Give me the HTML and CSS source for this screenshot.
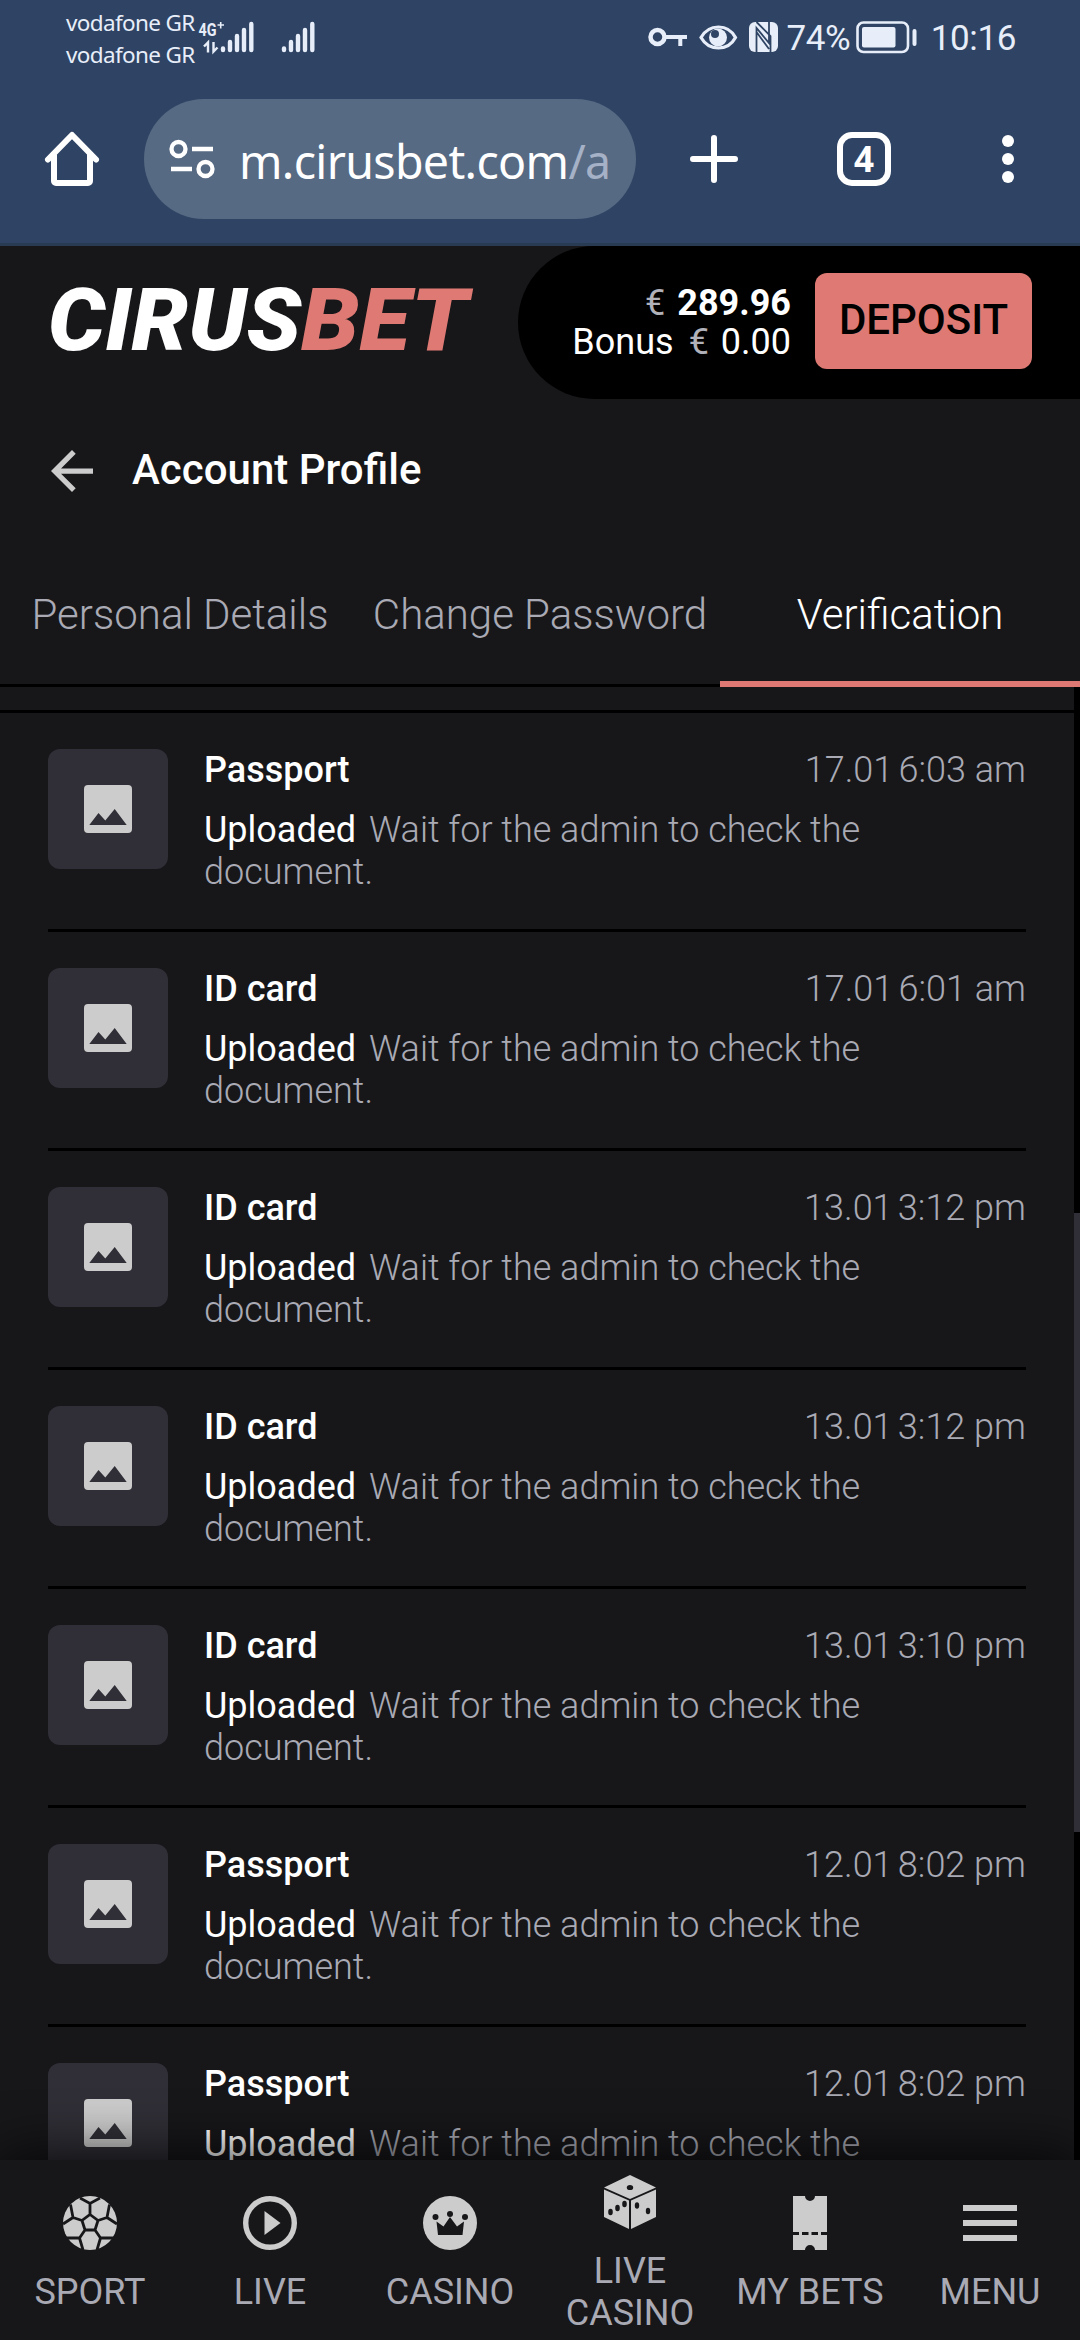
FILE: index.html
```html
<!DOCTYPE html>
<html lang="en">
<head>
<meta charset="utf-8">
<title>Account Profile</title>
<link rel="stylesheet" href="styles.css">
</head>
<body>
<svg width="0" height="0" class="defs">
  <symbol id="image" viewBox="0 0 48 48"><path fill-rule="evenodd" d="M4 0H44a4 4 0 0 1 4 4V44a4 4 0 0 1-4 4H4a4 4 0 0 1-4-4V4a4 4 0 0 1 4-4ZM5.300 40H42.700L30.700 24 21.300 35.500 14.500 28Z"/></symbol>
</svg>
<div class="screen">
  <div class="browser">
    <div class="status">
      <div class="carriers"><span>vodafone GR</span><span>vodafone GR</span></div>
      <svg class="signal" width="122" height="40" viewBox="197 17 122 40">
        <text x="199.500" y="35.500" class="g4" textLength="18" lengthAdjust="spacingAndGlyphs">4G</text>
        <path d="M218.500 25h6.500M221.700 22v6.500" stroke-width="1.600"/>
        <path d="M205 46.500l4-4V52.500M214.500 42V51.500l4-4" stroke-width="2.400"/>
        <g stroke-width="4.400" stroke-linecap="round">
          <path d="M224 48.500V50M231 42V50M238 36V50M245 30V50M252.300 24V50"/>
          <path d="M285 48.500V50M292 42V50M299 36V50M306 30V50M313.300 24V50"/>
        </g>
      </svg>
      <svg class="sysicons" width="131" height="40" viewBox="649 17 131 40">
        <g fill="none" stroke="#e8eef9">
          <circle cx="658.500" cy="37" r="7" stroke-width="4.500"/>
          <path d="M666 37H688M681.300 37V46" stroke-width="4"/>
          <path d="M702 37.500C710 23.500 729 23.500 736.500 37.500C729 51.500 710 51.500 702 37.500Z" stroke-width="3.200"/>
        </g>
        <circle cx="719" cy="37.500" r="9" fill="#e8eef9"/><circle cx="716" cy="34" r="4" fill="#2f4464"/>
        <rect x="750" y="22" width="29" height="30" rx="6" fill="#e8eef9"/>
        <path d="M757.500 52V28L770 43V22M757.500 22L771.500 36V52M757.500 32L770 49" fill="none" stroke="#2f4464" stroke-width="1.800"/>
      </svg>
      <span class="pct">74%</span>
      <svg class="battery" width="62" height="34" viewBox="858 20 62 34">
        <rect x="859.500" y="22.500" width="50.500" height="29.500" rx="6" fill="none" stroke="#e8eef9" stroke-width="2.600"/>
        <rect x="864" y="27" width="33.500" height="20.500" rx="2" fill="#e8eef9"/>
        <rect x="914.500" y="29" width="4" height="17" rx="2" fill="#e8eef9"/>
      </svg>
      <span class="clock">10:16</span>
    </div>
    <div class="toolbar">
      <svg class="home" width="60" height="60" viewBox="42 129 60 60" fill="none" stroke="#fff" stroke-width="6" stroke-linejoin="round" stroke-linecap="round"><path d="M48 159.500L72 135L96 159.500M54 155V181a2 2 0 0 0 2 2H88a2 2 0 0 0 2-2V155"/></svg>
      <div class="address">
        <svg width="48" height="40" viewBox="168 139 48 40" fill="none" stroke="#fff" stroke-width="4.300"><circle cx="178.500" cy="149" r="7"/><path d="M192 149H213M171 169H192"/><circle cx="205.500" cy="169" r="7"/></svg>
        <span class="url">m.cirusbet.com<span class="path">/a</span></span>
      </div>
      <svg class="plus" width="48" height="48" viewBox="0 0 48 48" stroke="#fff" stroke-width="6" stroke-linecap="round"><path d="M3 24H45M24 3V45"/></svg>
      <div class="tabcount">4</div>
      <svg class="dots" width="12" height="48" viewBox="0 0 12 48" fill="#fff"><circle cx="6" cy="6" r="6"/><circle cx="6" cy="24" r="6"/><circle cx="6" cy="42" r="6"/></svg>
    </div>
  </div>

  <header class="site">
    <svg class="logo" width="430" height="80" viewBox="44 280 430 80">
      <text x="48" y="350" textLength="253" lengthAdjust="spacingAndGlyphs" fill="#fff">CIRUS</text>
      <text x="301" y="350" textLength="167" lengthAdjust="spacingAndGlyphs" fill="#de7a73">BET</text>
    </svg>
    <div class="wallet">
      <div class="balance">
        <div><i>€</i> <b>289.96</b></div>
        <div><span class="bonus">Bonus</span><i>€</i> 0.00</div>
      </div>
      <button class="deposit">DEPOSIT</button>
    </div>
  </header>
  <div class="title">
    <svg width="42" height="42" viewBox="4 4 16 16" fill="#ccc"><path d="M20 11H7.830l5.590-5.590L12 4l-8 8 8 8 1.410-1.410L7.830 13H20v-2z"/></svg>
    <h1>Account Profile</h1>
  </div>
  <nav class="tabs"><a>Personal Details</a><a>Change Password</a><a class="on">Verification</a></nav>

  <main class="panel">
    <div class="list">
      <article><div class="thumb"><svg><use href="#image"/></svg></div><div class="info"><div class="head"><b>Passport</b><time><span>17.01</span> 6:03 am</time></div><p><em>Uploaded</em> Wait for the admin to check the document.</p></div></article>
      <article><div class="thumb"><svg><use href="#image"/></svg></div><div class="info"><div class="head"><b>ID card</b><time><span>17.01</span> 6:01 am</time></div><p><em>Uploaded</em> Wait for the admin to check the document.</p></div></article>
      <article><div class="thumb"><svg><use href="#image"/></svg></div><div class="info"><div class="head"><b>ID card</b><time><span>13.01</span> 3:12 pm</time></div><p><em>Uploaded</em> Wait for the admin to check the document.</p></div></article>
      <article><div class="thumb"><svg><use href="#image"/></svg></div><div class="info"><div class="head"><b>ID card</b><time><span>13.01</span> 3:12 pm</time></div><p><em>Uploaded</em> Wait for the admin to check the document.</p></div></article>
      <article><div class="thumb"><svg><use href="#image"/></svg></div><div class="info"><div class="head"><b>ID card</b><time><span>13.01</span> 3:10 pm</time></div><p><em>Uploaded</em> Wait for the admin to check the document.</p></div></article>
      <article><div class="thumb"><svg><use href="#image"/></svg></div><div class="info"><div class="head"><b>Passport</b><time><span>12.01</span> 8:02 pm</time></div><p><em>Uploaded</em> Wait for the admin to check the document.</p></div></article>
      <article><div class="thumb"><svg><use href="#image"/></svg></div><div class="info"><div class="head"><b>Passport</b><time><span>12.01</span> 8:02 pm</time></div><p><em>Uploaded</em> Wait for the admin to check the document.</p></div></article>
    </div>
    <div class="scroll"><div class="bar"></div></div>
  </main>

  <nav class="bottom">
    <a><svg viewBox="0 0 54 54"><circle cx="27" cy="27" r="27" fill="#ccc"/><g fill="none" stroke="#17171a" stroke-width="2.800"><path d="M27 18.500L35 24.500L32 34H22L19 24.500ZM27 18.500V7.500M35 24.500L44 21.500M32 34L37.500 42M22 34L16.500 42M19 24.500L10 21.500M17 2L27 7.500L37 2M46.500 8.500L44 21.500L54 28M51.500 42H37.500L34 54M20 54L16.500 42H2.500M0 28L10 21.500L7.500 8.500"/></g></svg><span>SPORT</span></a>
    <a><svg viewBox="0 0 54 54"><circle cx="27" cy="27" r="24.300" fill="none" stroke="#ccc" stroke-width="5.400"/><path d="M21.500 15V39L37.500 27Z" fill="#ccc"/></svg><span>LIVE</span></a>
    <a><svg viewBox="0 0 54 54"><circle cx="27" cy="27" r="27" fill="#ccc"/><g fill="#17171a"><circle cx="12.500" cy="21" r="3"/><circle cx="27" cy="18" r="3"/><circle cx="42" cy="21" r="3"/><path d="M13.500 25.500L20.500 30.500L27 21L34 30.500L41 25.500L39.500 39H15Z"/></g></svg><span>CASINO</span></a>
    <a><svg viewBox="0 0 54 54"><g fill="#ccc"><path d="M27 0L53 12.500L27 24L1 12.500ZM1 14.500L26 25.500V54L1 42ZM53 14.500L28 25.500V54L53 42Z"/></g><g fill="#17171a"><ellipse cx="27" cy="12.500" rx="3.200" ry="2.600"/><ellipse cx="7.500" cy="37" rx="2.300" ry="3.200"/><ellipse cx="14.500" cy="33" rx="2.300" ry="3.200"/><ellipse cx="21.500" cy="29" rx="2.300" ry="3.200"/><ellipse cx="34" cy="30.500" rx="2.200" ry="3.200"/><ellipse cx="45" cy="36" rx="2.200" ry="3.200"/></g></svg><span>LIVE CASINO</span></a>
    <a><svg viewBox="0 0 54 54"><path fill="#ccc" d="M10 0H22a5 5 0 0 0 10 0H44V36H10ZM10 39H44V54H32a5 5 0 0 0-10 0H10Z"/><path d="M16 37.500H19M25.500 37.500H28.500M35 37.500H38" stroke="#ccc" stroke-width="3.400"/></svg><span>MY BETS</span></a>
    <a><svg viewBox="0 0 54 54"><path fill="#ccc" d="M0 9H54V15H0ZM0 24H54V30H0ZM0 39H54V45H0Z"/></svg><span>MENU</span></a>
  </nav>
</div>
</body>
</html>
```
FILE: styles.css
```css
* { box-sizing: border-box; }
body { margin: 0; background: #17171a; }
.defs { display: block; }
.screen { width: 1080px; height: 2340px; overflow: hidden; display: flex; flex-direction: column; background: #17171a; color: #fff; font: 300 36px/42px Roboto, sans-serif; }
.screen > * { flex-shrink: 0; }
svg { display: block; flex-shrink: 0; }

.browser { height: 246px; background: #2f4464; border-bottom: 3px solid #293b52; font-family: "Noto Sans", sans-serif; font-weight: 400; }
.status { height: 75px; padding: 0 64px 0 66px; display: flex; align-items: flex-start; color: #e8eef9; }
.carriers { display: flex; flex-direction: column; padding-top: 7px; width: 131px; font-size: 22.500px; line-height: 32px; letter-spacing: -.65px; white-space: nowrap; }
.signal { margin-top: 17px; fill: none; stroke: #e8eef9; }
.g4 { font: 700 19px Roboto, sans-serif; fill: #e8eef9; stroke: none; }
.sysicons { margin: 17px 0 0 330px; }
.pct { width: 78px; padding-left: 8px; margin-top: 18px; font: 400 35px/42px Roboto, sans-serif; letter-spacing: -.4px; }
.battery { margin-top: 20px; }
.clock { margin: 18px 0 0 13px; font: 400 35px/42px Roboto, sans-serif; letter-spacing: -.4px; }
.toolbar { height: 168px; padding: 0 66px 0 42px; display: flex; align-items: flex-start; }
.home { margin-top: 54px; }
.address { width: 492px; height: 120px; margin: 24px 0 0 42px; padding-left: 24px; border-radius: 60px; background: #576a83; display: flex; align-items: center; }
.url { margin: 4px 0 0 23px; font-size: 46.500px; line-height: 60px; letter-spacing: -.65px; white-space: nowrap; }
.path { color: #a5b1c6; }
.plus { margin: 60px 0 0 54px; }
.tabcount { width: 54px; height: 54px; margin: 57px 0 0 99px; border: 6px solid #fff; border-radius: 15px; text-align: center; font: 700 35px/42px "Noto Sans", sans-serif; }
.dots { margin: 60px 0 0 111px; }

.site { height: 153px; padding-left: 44px; display: flex; justify-content: space-between; }
.logo { margin-top: 34px; font: italic 900 86px Roboto, sans-serif; }
.wallet { width: 562px; background: #000; border-radius: 77px 0 0 77px; padding-right: 48px; display: flex; justify-content: flex-end; align-items: flex-start; gap: 24px; }
.balance { margin-top: 38px; text-align: right; font-weight: 400; line-height: 39px; white-space: nowrap; }
.balance i { font-style: normal; color: #b0b1b9; margin-right: 3px; }
.balance b { font-weight: 700; }
.bonus { margin-right: 15px; }
.deposit { width: 217px; height: 96px; margin-top: 27px; padding: 0; border: 0; border-radius: 12px; background: #de7a73; color: #000; font: 500 42px/94px Roboto, sans-serif; padding-bottom: 2px; }

.title { height: 144px; padding: 0 51px; display: flex; align-items: center; gap: 39px; }
.title h1 { margin: -3px 0 0; font-size: 42px; line-height: 49px; font-weight: 500; }
.tabs { height: 144px; display: flex; font-size: 42px; line-height: 49px; color: #a9aab4; border-bottom: 3px solid #000; }
.tabs a { width: 360px; height: 144px; padding-top: 47px; text-align: center; white-space: nowrap; }
.tabs .on { color: #fff; border-bottom: 6px solid #de7a73; }

.panel { height: 1473px; display: flex; overflow: hidden; }
.list { width: 1074px; margin-top: 23px; border-top: 3px solid #000; padding: 0 48px; }
article { height: 219px; border-bottom: 3px solid #000; padding-top: 36px; display: flex; gap: 36px; }
.thumb { width: 120px; height: 120px; border-radius: 12px; background: #302f37; display: flex; align-items: center; justify-content: center; }
.thumb svg { width: 48px; height: 48px; fill: #ccc; }
.info { flex: 1; color: #a9aab4; }
.head { display: flex; justify-content: space-between; margin-bottom: 18px; }
.head b { font-weight: 500; color: #fff; }
.head time span { margin-right: -3.500px; }
.info p { margin: 0; width: 700px; }
.info em { font-style: normal; font-weight: 400; color: #fff; margin-right: 4px; }
.scroll { width: 6px; background: #000; padding-top: 526px; }
.bar { height: 619px; background: #302f37; }

.bottom { height: 180px; padding-top: 9px; display: flex; position: relative; background: #17171a; box-shadow: 0 0 60px rgba(0,0,0,.9); color: #a9aab4; font-weight: 400; }
.bottom a { width: 180px; display: flex; flex-direction: column; align-items: center; justify-content: center; gap: 21px; text-align: center; }
.bottom svg { width: 54px; height: 54px; }
.bottom span { padding: 0 20px; margin: 0 -20px; }
```
